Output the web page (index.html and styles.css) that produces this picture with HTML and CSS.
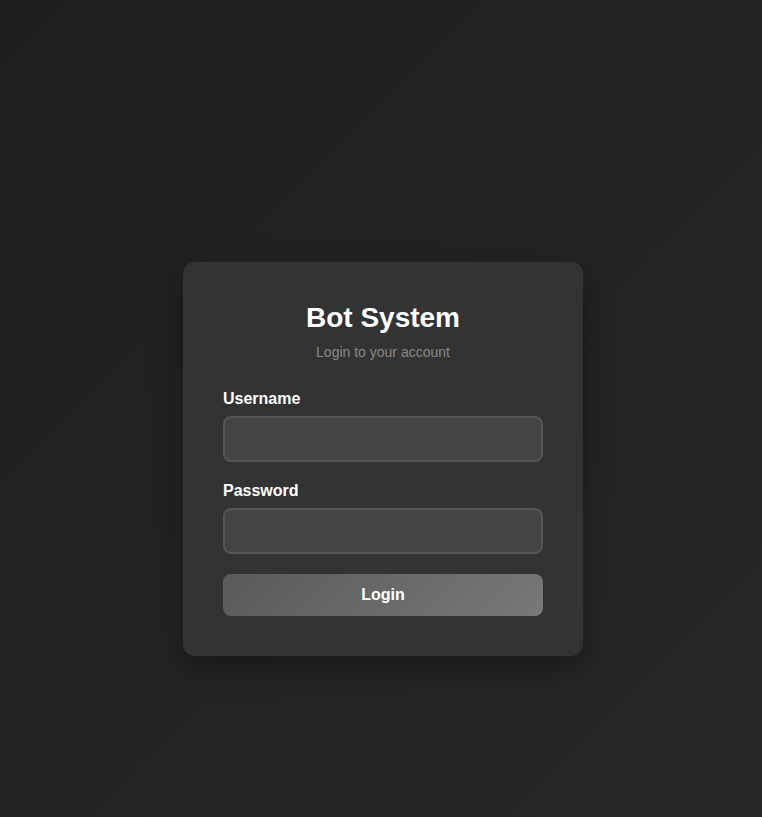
FILE: index.html
```html
<!DOCTYPE html>
<html lang="en">
<head>
<meta charset="UTF-8">
<title>Bot System - Login</title>
<link rel="stylesheet" href="styles.css">
</head>
<body>
<div class="page">
  <div class="card">
    <h1 class="title">Bot System</h1>
    <p class="subtitle">Login to your account</p>
    <form class="form">
      <div class="group">
        <label class="label" for="username">Username</label>
        <input class="input" id="username" type="text">
      </div>
      <div class="group">
        <label class="label" for="password">Password</label>
        <input class="input" id="password" type="password">
      </div>
      <button class="btn" type="button">Login</button>
    </form>
  </div>
</div>
</body>
</html>
```

FILE: styles.css
```css
* { box-sizing: border-box; }
html, body { margin: 0; padding: 0; }
body {
  font-family: "Liberation Sans", Arial, sans-serif;
  background: linear-gradient(135deg, #1f1f1f 0%, #232323 50%, #272727 100%);
  min-height: 100vh;
  color: #fff;
}
.page {
  min-height: 100vh;
  display: flex;
  justify-content: center;
  align-items: flex-start;
  padding: 262px 0 0 4px;
}
.card {
  width: 400px;
  background: #333333;
  border-radius: 12px;
  padding: 40px;
  box-shadow: 0 10px 30px rgba(0, 0, 0, 0.35);
}
.title {
  margin: 0 0 10px;
  font-size: 28px;
  line-height: 32px;
  font-weight: 700;
  text-align: center;
  color: #ffffff;
}
.subtitle {
  margin: 0 0 30px;
  font-size: 14px;
  line-height: 16px;
  text-align: center;
  color: #888888;
}
.form { display: flex; flex-direction: column; }
.group { display: flex; flex-direction: column; margin-bottom: 20px; }
.label {
  font-size: 16px;
  line-height: 18px;
  font-weight: 700;
  color: #ffffff;
  margin-bottom: 8px;
}
.input {
  height: 46px;
  width: 100%;
  background: #444444;
  border: 2px solid #555555;
  border-radius: 8px;
  padding: 12px;
  font-size: 16px;
  font-family: inherit;
  color: #fff;
  outline: none;
}
.btn {
  height: 42px;
  width: 100%;
  border: none;
  border-radius: 8px;
  background: linear-gradient(135deg, #5a5a5a 0%, #787878 100%);
  color: #ffffff;
  font-family: inherit;
  font-size: 16px;
  font-weight: 700;
  cursor: pointer;
}
```
